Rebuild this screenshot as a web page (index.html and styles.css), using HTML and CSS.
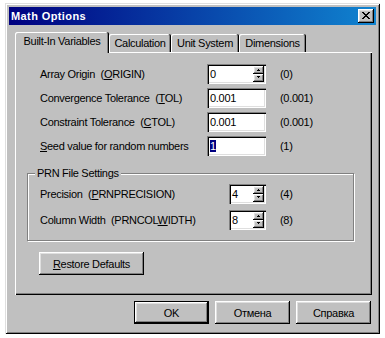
FILE: index.html
```html
<!DOCTYPE html>
<html>
<head>
<meta charset="utf-8">
<title>Math Options</title>
<link rel="stylesheet" href="styles.css">
</head>
<body>
<div class="window">
  <div class="titlebar">
    <span class="title">Math Options</span>
    <div class="close">
      <svg width="8" height="7" viewBox="0 0 8 7"><path d="M0 0h2v1H0zM6 0h2v1H6zM1 1h2v1H1zM5 1h2v1H5zM2 2h4v1H2zM3 3h2v1H3zM2 4h4v1H2zM1 5h2v1H1zM5 5h2v1H5zM0 6h2v1H0zM6 6h2v1H6z" fill="#000"/></svg>
    </div>
  </div>
  <div class="client">
    <div class="tabs">
      <div class="tab active">Built-In Variables</div>
      <div class="tab t-calc">Calculation</div>
      <div class="tab t-unit">Unit System</div>
      <div class="tab t-dim">Dimensions</div>
    </div>
    <div class="panel">
      <div class="rows">
        <div class="row">
          <span class="label">Array Origin  (<u>O</u>RIGIN)</span>
          <span class="edit wide"><span class="val">0</span>
            <span class="spin">
              <span class="half"><svg width="3" height="2" viewBox="0 0 3 2"><path d="M1 0h1v1H1zM0 1h3v1H0z"/></svg></span>
              <span class="half down"><svg width="3" height="2" viewBox="0 0 3 2"><path d="M0 0h3v1H0zM1 1h1v1H1z"/></svg></span>
            </span>
          </span>
          <span class="def">(0)</span>
        </div>
        <div class="row">
          <span class="label">Convergence Tolerance  (<u>T</u>OL)</span>
          <span class="edit wide"><span class="val">0.001</span></span>
          <span class="def">(0.001)</span>
        </div>
        <div class="row">
          <span class="label">Constraint Tolerance  (<u>C</u>TOL)</span>
          <span class="edit wide"><span class="val">0.001</span></span>
          <span class="def">(0.001)</span>
        </div>
        <div class="row">
          <span class="label"><u>S</u>eed value for random numbers</span>
          <span class="edit wide"><span class="val"><span class="sel">1</span></span></span>
          <span class="def">(1)</span>
        </div>
      </div>
      <div class="group">
        <span class="legend">PRN File Settings</span>
        <div class="grows">
          <div class="row">
            <span class="label glabel">Precision  (<u>P</u>RNPRECISION)</span>
            <span class="edit narrow"><span class="val">4</span>
              <span class="spin">
                <span class="half"><svg width="3" height="2" viewBox="0 0 3 2"><path d="M1 0h1v1H1zM0 1h3v1H0z"/></svg></span>
                <span class="half down"><svg width="3" height="2" viewBox="0 0 3 2"><path d="M0 0h3v1H0zM1 1h1v1H1z"/></svg></span>
              </span>
            </span>
            <span class="def gdef">(4)</span>
          </div>
          <div class="row">
            <span class="label glabel">Column Width  (PRNCOL<u>W</u>IDTH)</span>
            <span class="edit narrow"><span class="val">8</span>
              <span class="spin">
                <span class="half"><svg width="3" height="2" viewBox="0 0 3 2"><path d="M1 0h1v1H1zM0 1h3v1H0z"/></svg></span>
                <span class="half down"><svg width="3" height="2" viewBox="0 0 3 2"><path d="M0 0h3v1H0zM1 1h1v1H1z"/></svg></span>
              </span>
            </span>
            <span class="def gdef">(8)</span>
          </div>
        </div>
      </div>
      <div class="btn restore"><u>R</u>estore Defaults</div>
    </div>
    <div class="buttons">
      <div class="btn default">OK</div>
      <div class="btn">Отмена</div>
      <div class="btn">Справка</div>
    </div>
  </div>
</div>
</body>
</html>
```

FILE: styles.css
```css
* { box-sizing: border-box; }
html, body { margin: 0; background: #fff; }
body {
  font-family: "Liberation Sans", Arial, sans-serif;
  font-size: 11px;
  color: #000;
  letter-spacing: -0.3px;
}
u { text-decoration: underline; text-underline-offset: 1px; }

.window {
  margin: 3px 0 0 5px;
  width: 375px;
  height: 331px;
  padding: 4px;
  background: #c0c0c0;
  box-shadow: inset 1px 1px #dfdfdf, inset -1px -1px #000, inset 2px 2px #fff, inset -2px -2px #808080;
  display: flex;
  flex-direction: column;
}

.titlebar {
  height: 18px;
  display: flex;
  align-items: center;
  justify-content: space-between;
  padding: 0 2px 0 2px;
  background: linear-gradient(to right, #000080, #1084d0);
}
.title {
  color: #fff;
  font-weight: bold;
  font-size: 11px;
  letter-spacing: 0.4px;
  line-height: 17px;
}
.close {
  width: 16px;
  height: 14px;
  padding: 3px 0 0 4px;
  background: #c0c0c0;
  box-shadow: inset -1px -1px #000, inset 1px 1px #fff, inset -2px -2px #808080, inset 2px 2px #dfdfdf;
}
.close svg { display: block; }

.client {
  flex: 1;
  display: flex;
  flex-direction: column;
  padding: 7px 4px 0 6px;
}

.tabs {
  display: flex;
  align-items: flex-end;
  height: 20px;
}
.tab {
  height: 18px;
  padding-top: 3px;
  line-height: 13px;
  text-align: center;
  white-space: nowrap;
  background: #c0c0c0;
  border-radius: 2px 2px 0 0;
  box-shadow: inset -1px 0 #000, inset 1px 1px #fff, inset -2px 0 #808080;
}
.tab.active {
  position: relative;
  z-index: 1;
  width: 94px;
  height: 21px;
  margin-bottom: -1px;
}
.t-calc { width: 62px; }
.t-unit { width: 68px; }
.t-dim { width: 67px; }

.panel {
  height: 243px;
  background: #c0c0c0;
  box-shadow: inset 1px 1px #fff, inset -1px -1px #000, inset -2px -2px #808080;
  padding: 12px 0 0 12px;
}

.rows {
  display: flex;
  flex-direction: column;
  gap: 4px;
  padding-left: 13px;
}
.row {
  display: flex;
  align-items: center;
  height: 20px;
}
.label {
  flex: 0 0 167px;
  white-space: pre;
  line-height: 20px;
}
.glabel { flex-basis: 189px; }

.edit {
  display: flex;
  height: 20px;
  padding: 2px;
  background: #fff;
  box-shadow: inset 1px 1px #808080, inset 2px 2px #000, inset -1px -1px #fff, inset -2px -2px #dfdfdf;
}
.wide { width: 59px; }
.narrow { width: 37px; }
.val {
  flex: 1;
  padding-left: 1px;
  line-height: 16px;
  white-space: nowrap;
}
.sel {
  background: #000080;
  color: #fff;
}
.spin {
  width: 11px;
  display: flex;
  flex-direction: column;
}
.half {
  height: 8px;
  padding: 3px 0 0 4px;
  background: #c0c0c0;
  box-shadow: inset -1px -1px #000, inset 1px 1px #fff, inset -2px -2px #808080, inset 2px 2px #dfdfdf;
}
.half.down { padding-top: 2px; }
.half svg { display: block; fill: #000; }

.def { margin-left: 14px; white-space: nowrap; }

.group {
  position: relative;
  margin-top: 17px;
  width: 327px;
  height: 68px;
  border: 1px solid #808080;
  box-shadow: 1px 1px #fff, inset 1px 1px #fff;
  padding: 10px 0 0 12px;
}
.legend {
  position: absolute;
  top: -7px;
  left: 7px;
  padding: 0 2px;
  line-height: 13px;
  background: #c0c0c0;
}
.grows {
  display: flex;
  flex-direction: column;
  gap: 6px;
}

.btn {
  display: flex;
  align-items: center;
  justify-content: center;
  height: 23px;
  width: 75px;
  background: #c0c0c0;
  white-space: nowrap;
  box-shadow: inset -1px -1px #000, inset 1px 1px #fff, inset -2px -2px #808080, inset 2px 2px #dfdfdf;
}
.btn.default {
  box-shadow: inset 0 0 0 1px #000, inset -2px -2px #000, inset 2px 2px #fff, inset -3px -3px #808080, inset 3px 3px #dfdfdf;
}
.restore {
  width: 105px;
  margin: 11px 0 0 12px;
}
.buttons {
  display: flex;
  justify-content: flex-end;
  gap: 6px;
  margin: 6px 1px 0 0;
}
```
